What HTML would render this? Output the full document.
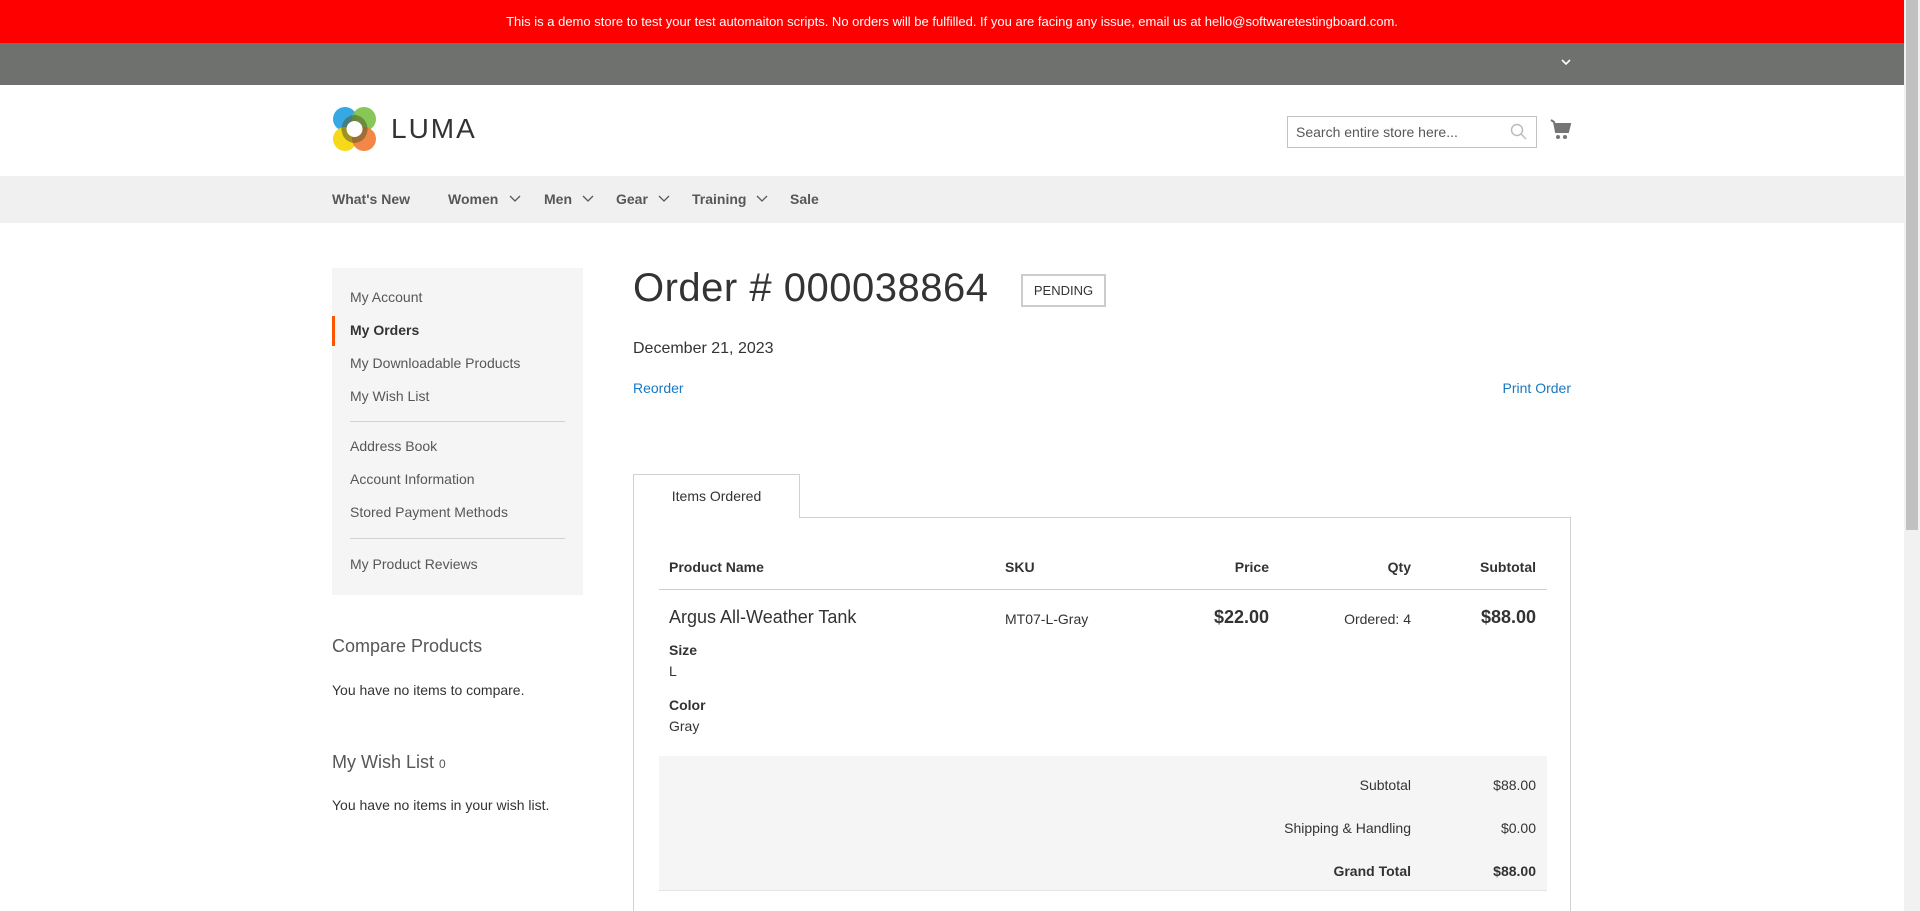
<!DOCTYPE html>
<html style="width:1920px;height:911px;overflow:hidden"><head><meta charset="utf-8"><style>
*{margin:0;padding:0;box-sizing:border-box}
body{width:1920px;height:911px;overflow:hidden;position:relative;font-family:"Liberation Sans",sans-serif;color:#333;font-size:14px;background:#fff}
.a{position:absolute;white-space:nowrap}
.lnk{color:#1979c3}
.side div{position:absolute;left:18px}
.r{text-align:right}
</style></head><body>
<div class="a" style="left:0;top:0;width:1904px;height:43px;background:#ff0000;color:#fff;font-size:13px;text-align:center;line-height:43px">This is a demo store to test your test automaiton scripts. No orders will be fulfilled. If you are facing any issue, email us at hello@softwaretestingboard.com.</div>
<div class="a" style="left:0;top:43px;width:1904px;height:42px;background:#6e716e"></div>
<svg class="a" style="left:1561px;top:58px" width="10" height="8"><path d="M1 2l4 4 4-4" stroke="#fff" stroke-width="1.6" fill="none"/></svg>
<div class="a" style="left:1904px;top:0;width:16px;height:911px;background:#f1f1f1"></div>
<div class="a" style="left:1906px;top:0;width:12px;height:530px;background:#c1c1c1"></div>
<svg class="a" style="left:332px;top:106px" width="46" height="47" viewBox="0 0 46 47">
<circle cx="13" cy="13" r="12" fill="#1fa0e0" opacity=".9"/>
<circle cx="32" cy="13" r="12" fill="#7bc144" opacity=".9"/>
<circle cx="13" cy="33" r="12" fill="#f5d600" opacity=".9"/>
<circle cx="32" cy="33" r="12" fill="#f37a33" opacity=".9"/>
<ellipse cx="22.5" cy="23" rx="13" ry="14" fill="#5a5a2a" opacity=".55"/>
<circle cx="22.5" cy="23" r="8" fill="#fff"/>
</svg>
<div class="a" style="left:391px;top:113px;font-size:28px;letter-spacing:2px;color:#333">LUMA</div>
<div class="a" style="left:1287px;top:116px;width:250px;height:32px;border:1px solid #c2c2c2;font-size:14px;color:#575757;line-height:30px;padding-left:8px">Search entire store here...</div>
<svg class="a" style="left:1510px;top:123px" width="18" height="18"><circle cx="7" cy="7" r="5.5" stroke="#bbb" stroke-width="1.5" fill="none"/><path d="M11 11l5 5" stroke="#bbb" stroke-width="1.5"/></svg>
<svg class="a" style="left:1550px;top:119px" width="22" height="22" viewBox="0 0 22 22"><path d="M1 1l3 2 2 10h12l2-8H5" stroke="#757575" stroke-width="2" fill="#757575"/><circle cx="8" cy="18" r="2" fill="#757575"/><circle cx="15" cy="18" r="2" fill="#757575"/></svg>
<div class="a" style="left:0;top:176px;width:1904px;height:47px;background:#f0f0f0"></div>
<div class="a" style="top:191px;left:332px;font-weight:bold;color:#575757;font-size:14px">What's New</div>
<div class="a" style="top:191px;left:448px;font-weight:bold;color:#575757">Women</div>
<div class="a" style="top:191px;left:544px;font-weight:bold;color:#575757">Men</div>
<div class="a" style="top:191px;left:616px;font-weight:bold;color:#575757">Gear</div>
<div class="a" style="top:191px;left:692px;font-weight:bold;color:#575757">Training</div>
<div class="a" style="top:191px;left:790px;font-weight:bold;color:#575757">Sale</div>
<svg class="a" style="left:0;top:0" width="900" height="223"><g stroke="#575757" stroke-width="1.3" fill="none"><path d="M510 196l5 5 5-5"/><path d="M583 196l5 5 5-5"/><path d="M659 196l5 5 5-5"/><path d="M757 196l5 5 5-5"/></g></svg>
<div class="a side" style="left:332px;top:268px;width:251px;height:327px;background:#f5f5f5;color:#575757">
<div style="top:21px">My Account</div>
<div style="top:54px;font-weight:bold;color:#333">My Orders</div>
<div style="left:0;top:48px;width:3px;height:30px;background:#ff5501"></div>
<div style="top:87px">My Downloadable Products</div>
<div style="top:120px">My Wish List</div>
<div style="top:153px;width:215px;height:1px;background:#d1d1d1"></div>
<div style="top:170px">Address Book</div>
<div style="top:203px">Account Information</div>
<div style="top:236px">Stored Payment Methods</div>
<div style="top:270px;width:215px;height:1px;background:#d1d1d1"></div>
<div style="top:288px">My Product Reviews</div>
</div>
<div class="a" style="left:332px;top:636px;font-size:18px;font-weight:300;color:#575757">Compare Products</div>
<div class="a" style="left:332px;top:682px">You have no items to compare.</div>
<div class="a" style="left:332px;top:752px;font-size:18px;color:#575757">My Wish List <span style="font-size:12px">0</span></div>
<div class="a" style="left:332px;top:797px">You have no items in your wish list.</div>
<div class="a" style="left:633px;top:266px;font-size:40px;font-weight:300;color:#333;letter-spacing:0.5px">Order # 000038864</div>
<div class="a" style="left:1021px;top:274px;width:85px;height:33px;border:2px solid #ccc;font-size:13px;line-height:29px;text-align:center">PENDING</div>
<div class="a" style="left:633px;top:340px;font-size:16px">December 21, 2023</div>
<div class="a lnk" style="left:633px;top:380px">Reorder</div>
<div class="a lnk r" style="left:1371px;width:200px;top:380px">Print Order</div>
<div class="a" style="left:633px;top:517px;width:938px;height:420px;border:1px solid #d1d1d1"></div>
<div class="a" style="left:633px;top:474px;width:167px;height:44px;border:1px solid #d1d1d1;border-bottom:none;background:#fff;text-align:center;line-height:42px">Items Ordered</div>
<div class="a" style="left:669px;top:559px;font-weight:bold">Product Name</div>
<div class="a" style="left:1005px;top:559px;font-weight:bold">SKU</div>
<div class="a r" style="left:1169px;width:100px;top:559px;font-weight:bold">Price</div>
<div class="a r" style="left:1311px;width:100px;top:559px;font-weight:bold">Qty</div>
<div class="a r" style="left:1436px;width:100px;top:559px;font-weight:bold">Subtotal</div>
<div class="a" style="left:659px;top:589px;width:888px;height:1px;background:#ccc"></div>
<div class="a" style="left:669px;top:607px;font-size:18px">Argus All-Weather Tank</div>
<div class="a" style="left:1005px;top:611px">MT07-L-Gray</div>
<div class="a r" style="left:1169px;width:100px;top:607px;font-size:18px;font-weight:bold">$22.00</div>
<div class="a r" style="left:1311px;width:100px;top:611px">Ordered: 4</div>
<div class="a r" style="left:1436px;width:100px;top:607px;font-size:18px;font-weight:bold">$88.00</div>
<div class="a" style="left:669px;top:642px;font-weight:bold">Size</div>
<div class="a" style="left:669px;top:663px">L</div>
<div class="a" style="left:669px;top:697px;font-weight:bold">Color</div>
<div class="a" style="left:669px;top:718px">Gray</div>
<div class="a" style="left:659px;top:756px;width:888px;height:135px;background:#f5f5f5;border-bottom:1px solid #e4e4e4"></div>
<div class="a r" style="left:1211px;width:200px;top:777px">Subtotal</div>
<div class="a r" style="left:1436px;width:100px;top:777px">$88.00</div>
<div class="a r" style="left:1211px;width:200px;top:820px">Shipping &amp; Handling</div>
<div class="a r" style="left:1436px;width:100px;top:820px">$0.00</div>
<div class="a r" style="left:1211px;width:200px;top:863px;font-weight:bold">Grand Total</div>
<div class="a r" style="left:1436px;width:100px;top:863px;font-weight:bold">$88.00</div>
</body></html>
